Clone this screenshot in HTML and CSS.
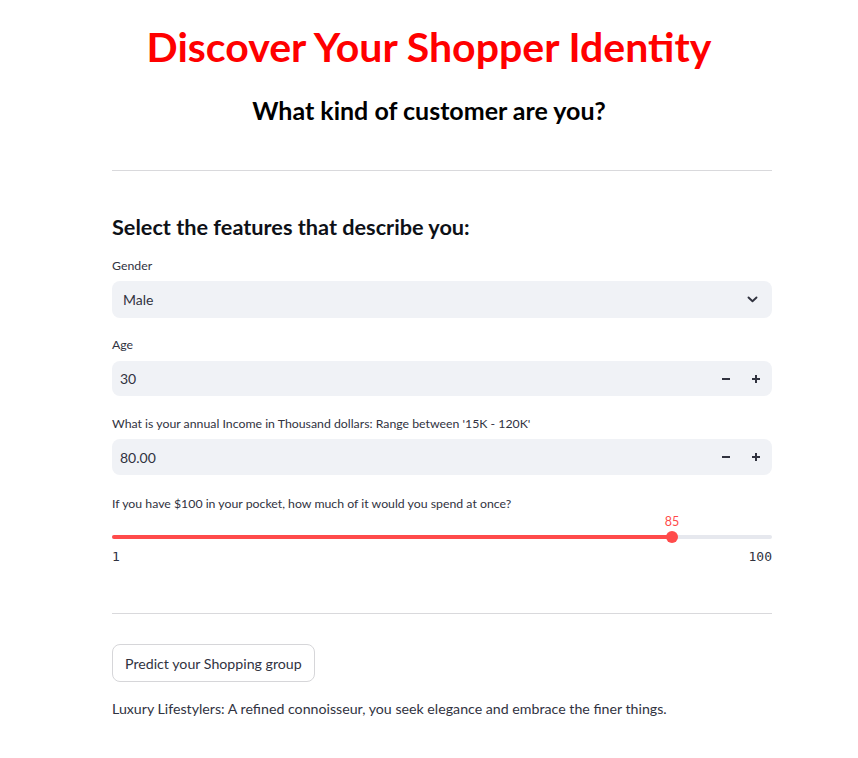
FILE: index.html
```html
<!DOCTYPE html>
<html>
<head>
<meta charset="utf-8">
<link rel="stylesheet" href="styles.css">
</head>
<body>
<header class="hero">
  <h1 class="title">Discover Your Shopper Identity</h1>
  <h2 class="subtitle">What kind of customer are you?</h2>
</header>
<main class="content">
  <hr class="rule rule-top">
  <h3 class="section">Select the features that describe you:</h3>

  <div class="field field-first">
    <label class="label">Gender</label>
    <div class="box select">
      <span class="value">Male</span>
      <svg class="chev" width="11" height="7" viewBox="0 0 11 7"><path d="M1.5 1.5 L5.5 5.2 L9.5 1.5" fill="none" stroke="#31333f" stroke-width="1.9" stroke-linecap="round" stroke-linejoin="round"/></svg>
    </div>
  </div>

  <div class="field field-age">
    <label class="label">Age</label>
    <div class="box number">
      <span class="value">30</span>
      <div class="steps">
        <span class="step"><svg width="10" height="10" viewBox="0 0 10 10"><rect x="1" y="4" width="8" height="2" fill="#31333f"/></svg></span>
        <span class="step"><svg width="10" height="10" viewBox="0 0 10 10"><rect x="1" y="4" width="8" height="2" fill="#31333f"/><rect x="4" y="1" width="2" height="8" fill="#31333f"/></svg></span>
      </div>
    </div>
  </div>

  <div class="field">
    <label class="label">What is your annual Income in Thousand dollars: Range between '15K - 120K'</label>
    <div class="box number">
      <span class="value">80.00</span>
      <div class="steps">
        <span class="step"><svg width="10" height="10" viewBox="0 0 10 10"><rect x="1" y="4" width="8" height="2" fill="#31333f"/></svg></span>
        <span class="step"><svg width="10" height="10" viewBox="0 0 10 10"><rect x="1" y="4" width="8" height="2" fill="#31333f"/><rect x="4" y="1" width="2" height="8" fill="#31333f"/></svg></span>
      </div>
    </div>
  </div>

  <div class="field field-slider">
    <label class="label">If you have $100 in your pocket, how much of it would you spend at once?</label>
    <div class="slider">
      <div class="track">
        <div class="fill" style="width: 84.85%"></div>
        <div class="thumb" style="left: 84.85%"><span class="thumb-val">85</span></div>
      </div>
      <div class="ticks"><span>1</span><span>100</span></div>
    </div>
  </div>

  <hr class="rule rule-bottom">

  <button class="btn">Predict your Shopping group</button>
  <p class="result">Luxury Lifestylers: A refined connoisseur, you seek elegance and embrace the finer things.</p>
</main>
</body>
</html>
```

FILE: styles.css
```css
* { box-sizing: border-box; }
body {
  margin: 0;
  background: #ffffff;
  font-family: Lato, "Noto Sans", sans-serif;
  color: #31333f;
}
.hero {
  text-align: center;
  padding-top: 24px;
}
.title {
  margin: 0;
  font-size: 41px;
  line-height: 46px;
  font-weight: 700;
  color: #ff0000;
}
.subtitle {
  margin: 23px 0 0;
  font-size: 25px;
  line-height: 34px;
  font-weight: 700;
  color: #000000;
}
.content {
  width: 660px;
  margin-left: 112px;
}
.rule {
  border: none;
  border-top: 1px solid #d9d9dc;
  margin: 0;
}
.rule-top { margin-top: 43px; }
.section {
  margin: 42px 0 0;
  font-size: 21.7px;
  line-height: 28px;
  font-weight: 700;
  color: #0e1117;
}
.field { margin-top: 19px; }
.field-first { margin-top: 16px; }
.field-age { margin-top: 18px; }
.field-age .label { margin-bottom: 7px; }
.field-age .box { height: 35px; }
.field-slider { margin-top: 20px; }
.label {
  display: block;
  font-size: 12.3px;
  line-height: 18px;
  margin-bottom: 6px;
}
.box {
  height: 37px;
  background: #f0f2f6;
  border-radius: 8px;
  display: flex;
  align-items: center;
  justify-content: space-between;
  padding: 0 14px 0 11px;
  font-size: 14px;
}
.number { padding-right: 6px; padding-left: 8px; height: 36px; }
.steps { display: flex; gap: 10px; }
.step { width: 20px; height: 20px; display: flex; align-items: center; justify-content: center; }
.track {
  position: relative;
  height: 4px;
  margin-top: 22px;
  background: #e6e8ee;
  border-radius: 2px;
}
.fill {
  height: 4px;
  background: #ff4b4b;
  border-radius: 2px;
}
.thumb {
  position: absolute;
  top: -4px;
  width: 12px;
  height: 12px;
  margin-left: -6px;
  border-radius: 50%;
  background: #ff4b4b;
}
.thumb-val {
  position: absolute;
  bottom: 14px;
  left: 50%;
  transform: translateX(-50%);
  font-size: 12.5px;
  color: #ff4b4b;
  line-height: 14px;
}
.ticks {
  display: flex;
  justify-content: space-between;
  font-family: "DejaVu Sans Mono", "Liberation Mono", monospace;
  font-size: 13px;
  margin-top: 10px;
  line-height: 16px;
}
.rule-bottom { margin-top: 48px; }
.btn {
  margin-top: 30px;
  height: 38px;
  padding: 0 12px;
  background: #ffffff;
  border: 1px solid #d6d6d9;
  border-radius: 8px;
  font-family: inherit;
  font-size: 14.2px;
  color: #31333f;
}
.result {
  margin: 17px 0 0;
  font-size: 14.2px;
  line-height: 20px;
}
```
